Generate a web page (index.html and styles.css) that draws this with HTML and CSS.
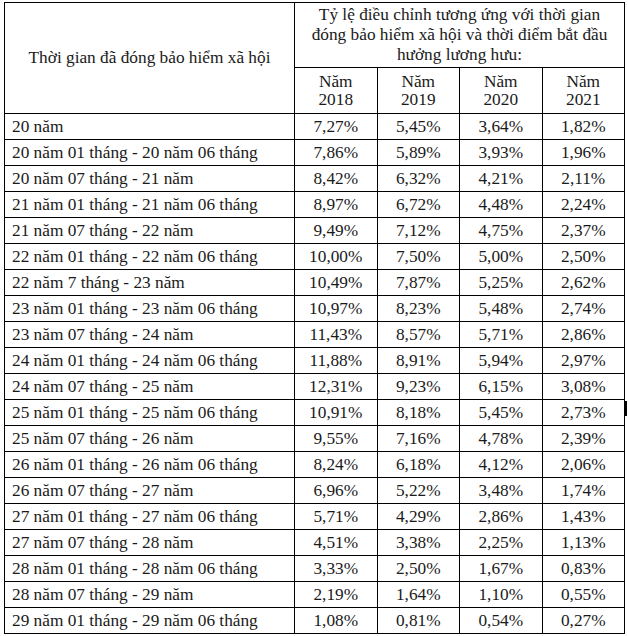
FILE: index.html
```html
<!DOCTYPE html>
<html lang="vi">
<head>
<meta charset="utf-8">
<title>Tỷ lệ điều chỉnh</title>
<link rel="stylesheet" href="styles.css">
</head>
<body>
<div class="page">
<table class="rates">
<colgroup>
<col class="c-label">
<col class="c-year">
<col class="c-year">
<col class="c-year">
<col class="c-year">
</colgroup>
<thead>
<tr class="h1">
<th rowspan="2" class="label-head">Thời gian đã đóng bảo hiểm xã hội</th>
<th colspan="4" class="group-head">Tỷ lệ điều chỉnh tương ứng với thời gian<br>đóng bảo hiểm xã hội và thời điểm bắt đầu<br>hưởng lương hưu:</th>
</tr>
<tr class="h2">
<th class="year">Năm<br>2018</th>
<th class="year">Năm<br>2019</th>
<th class="year">Năm<br>2020</th>
<th class="year">Năm<br>2021</th>
</tr>
</thead>
<tbody>
<tr><td>20 năm</td><td>7,27%</td><td>5,45%</td><td>3,64%</td><td>1,82%</td></tr>
<tr><td>20 năm 01 tháng - 20 năm 06 tháng</td><td>7,86%</td><td>5,89%</td><td>3,93%</td><td>1,96%</td></tr>
<tr><td>20 năm 07 tháng - 21 năm</td><td>8,42%</td><td>6,32%</td><td>4,21%</td><td>2,11%</td></tr>
<tr><td>21 năm 01 tháng - 21 năm 06 tháng</td><td>8,97%</td><td>6,72%</td><td>4,48%</td><td>2,24%</td></tr>
<tr><td>21 năm 07 tháng - 22 năm</td><td>9,49%</td><td>7,12%</td><td>4,75%</td><td>2,37%</td></tr>
<tr><td>22 năm 01 tháng - 22 năm 06 tháng</td><td>10,00%</td><td>7,50%</td><td>5,00%</td><td>2,50%</td></tr>
<tr><td>22 năm 7 tháng - 23 năm</td><td>10,49%</td><td>7,87%</td><td>5,25%</td><td>2,62%</td></tr>
<tr><td>23 năm 01 tháng - 23 năm 06 tháng</td><td>10,97%</td><td>8,23%</td><td>5,48%</td><td>2,74%</td></tr>
<tr><td>23 năm 07 tháng - 24 năm</td><td>11,43%</td><td>8,57%</td><td>5,71%</td><td>2,86%</td></tr>
<tr><td>24 năm 01 tháng - 24 năm 06 tháng</td><td>11,88%</td><td>8,91%</td><td>5,94%</td><td>2,97%</td></tr>
<tr><td>24 năm 07 tháng - 25 năm</td><td>12,31%</td><td>9,23%</td><td>6,15%</td><td>3,08%</td></tr>
<tr><td>25 năm 01 tháng - 25 năm 06 tháng</td><td>10,91%</td><td>8,18%</td><td>5,45%</td><td>2,73%</td></tr>
<tr><td>25 năm 07 tháng - 26 năm</td><td>9,55%</td><td>7,16%</td><td>4,78%</td><td>2,39%</td></tr>
<tr><td>26 năm 01 tháng - 26 năm 06 tháng</td><td>8,24%</td><td>6,18%</td><td>4,12%</td><td>2,06%</td></tr>
<tr><td>26 năm 07 tháng - 27 năm</td><td>6,96%</td><td>5,22%</td><td>3,48%</td><td>1,74%</td></tr>
<tr><td>27 năm 01 tháng - 27 năm 06 tháng</td><td>5,71%</td><td>4,29%</td><td>2,86%</td><td>1,43%</td></tr>
<tr><td>27 năm 07 tháng - 28 năm</td><td>4,51%</td><td>3,38%</td><td>2,25%</td><td>1,13%</td></tr>
<tr><td>28 năm 01 tháng - 28 năm 06 tháng</td><td>3,33%</td><td>2,50%</td><td>1,67%</td><td>0,83%</td></tr>
<tr><td>28 năm 07 tháng - 29 năm</td><td>2,19%</td><td>1,64%</td><td>1,10%</td><td>0,55%</td></tr>
<tr><td>29 năm 01 tháng - 29 năm 06 tháng</td><td>1,08%</td><td>0,81%</td><td>0,54%</td><td>0,27%</td></tr>
</tbody>
</table>
<span class="cursor"></span>
</div>
</body>
</html>
```
FILE: styles.css
```css
html, body {
  margin: 0;
  padding: 0;
  background: #fff;
}
.page {
  position: relative;
  width: 628px;
  height: 636px;
  padding: 2px 0 0 4px;
  box-sizing: border-box;
}
.rates {
  border-collapse: collapse;
  table-layout: fixed;
  width: 620px;
  font-family: "Liberation Serif", "Times New Roman", serif;
  font-size: 17.3px;
  color: #1a1a1a;
}
.c-label { width: 290px; }
.c-year { width: 82.5px; }
.rates th, .rates td {
  border: 1px solid #000;
  padding: 0;
  font-weight: normal;
}
.h1 { height: 65px; }
.h2 { height: 46px; }
.label-head {
  text-align: center;
  vertical-align: middle;
  line-height: 20px;
}
.group-head {
  text-align: center;
  vertical-align: middle;
  line-height: 20px;
  padding-bottom: 2px;
}
.year {
  text-align: center;
  vertical-align: middle;
  line-height: 18px;
}
.rates tbody tr { height: 26px; }
.rates tbody td {
  text-align: center;
  vertical-align: middle;
  line-height: 20px;
}
.rates tbody td:first-child {
  text-align: left;
  padding-left: 7px;
}
.cursor {
  position: absolute;
  left: 624px;
  top: 401px;
  width: 3px;
  height: 15px;
  background: #000;
}
```
